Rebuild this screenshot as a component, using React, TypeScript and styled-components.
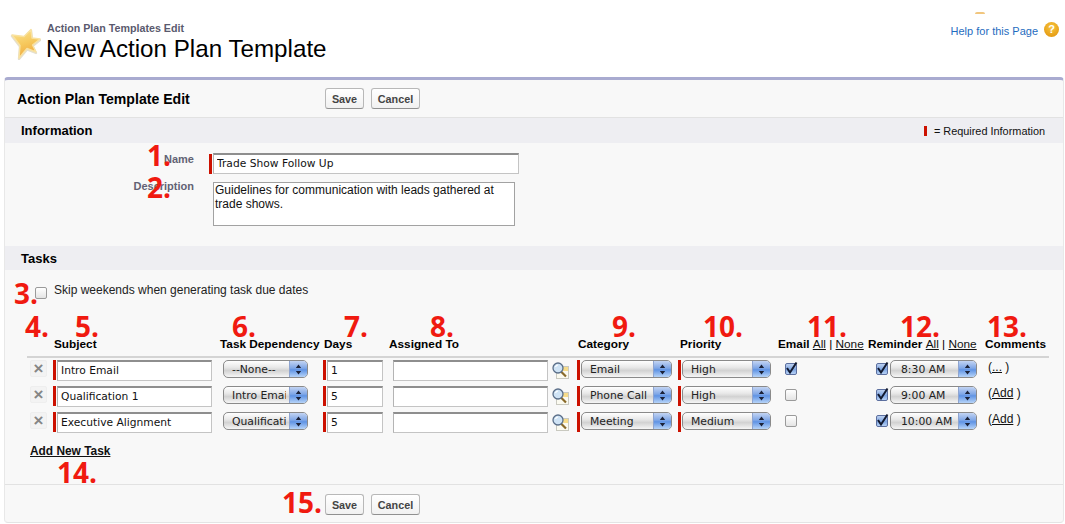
import React from 'react';
import styled, { createGlobalStyle } from 'styled-components';

const GlobalStyle = createGlobalStyle`
  html, body {
    margin: 0;
    background: #fff;
    font-family: "Liberation Sans", Arial, sans-serif;
    color: #000;
  }
`;

const Page = styled.div`
  position: relative;
  width: 1065px;
  height: 524px;
  overflow: hidden;
`;

const PageHead = styled.header`
  display: flex;
  height: 77px;
  box-sizing: border-box;
  padding: 28px 6px 0 9px;
`;

const Titles = styled.div`
  margin: -6px 0 0 5px;
`;

const Crumb = styled.div`
  margin-left: 1px;
  font-size: 10.7px;
  font-weight: bold;
  line-height: 13px;
  color: #5a5a6e;
`;

const PageTitle = styled.h1`
  margin: 0;
  font-size: 24.2px;
  font-weight: normal;
  line-height: 28px;
`;

const Help = styled.div`
  margin: -6px 0 0 auto;
  display: flex;
  align-items: flex-start;
  gap: 6px;
  color: #1f6cc0;
  font-size: 11px;
  line-height: 15px;
`;

const HelpText = styled.span`
  margin-top: 2px;
`;

const HelpDot = styled.span`
  display: flex;
  align-items: center;
  justify-content: center;
  width: 15px;
  height: 15px;
  border-radius: 50%;
  background: radial-gradient(circle at 50% 35%, #f7c640, #e08f06);
  color: #fff;
  font-size: 11px;
  font-weight: bold;
`;

const StrayArc = styled.span`
  position: absolute;
  left: 975px;
  top: 12px;
  width: 10px;
  height: 2px;
  border-radius: 5px 5px 0 0;
  background: #f1c67e;
`;

const Panel = styled.main`
  margin-left: 4px;
  width: 1060px;
  height: 446px;
  box-sizing: border-box;
  background: #f8f8f8;
  border-top: 3px solid #a9abd0;
  border-left: 1px solid #e8e8e8;
  border-right: 1px solid #e8e8e8;
  border-bottom: 1px solid #e4e4e4;
  border-radius: 4px;
`;

const TopRow = styled.div`
  display: grid;
  grid-template-columns: 320px auto;
  justify-content: start;
  align-items: center;
  height: 37px;
  border-bottom: 1px solid #e2e2e2;
`;

const TopTitle = styled.h2`
  margin: 0 0 0 12px;
  font-size: 14.1px;
  font-weight: bold;
  white-space: nowrap;
`;

const Buttons = styled.div`
  display: flex;
  gap: 7px;
`;

const Button = styled.button<{ $wide?: boolean }>`
  width: ${(p) => (p.$wide ? '49px' : '39px')};
  height: 21px;
  padding: 0;
  border: 1px solid #b8b8b8;
  border-bottom-color: #909090;
  border-radius: 3px;
  background: linear-gradient(#fff, #f1f1f1);
  color: #444;
  font-family: inherit;
  font-size: 10.8px;
  font-weight: bold;
`;

const SectionBar = styled.div`
  display: flex;
  align-items: center;
  justify-content: space-between;
  box-sizing: border-box;
  padding: 0 18px 0 16px;
  background: #eeeef2;
`;

const InfoBar = styled(SectionBar)`
  height: 25px;
`;

const TasksBar = styled(SectionBar)`
  height: 24px;
`;

const SectionTitle = styled.h3`
  margin: 0;
  font-size: 13px;
  font-weight: bold;
`;

const Legend = styled.div`
  display: flex;
  align-items: center;
  gap: 7px;
  font-size: 10.9px;
  color: #111;
`;

const RedBar = styled.span`
  flex: none;
  width: 3px;
  height: 20px;
  background: #cc1100;
`;

const LegendBar = styled(RedBar)`
  height: 10px;
`;

const InfoBody = styled.div`
  display: grid;
  grid-template-columns: 189px auto;
  column-gap: 19px;
  row-gap: 8px;
  align-content: start;
  height: 103px;
  box-sizing: border-box;
  padding-top: 10px;
`;

const FieldLabel = styled.label`
  justify-self: end;
  font-size: 11px;
  font-weight: bold;
  color: #626274;
  line-height: 13px;
`;

const DescriptionLabel = styled(FieldLabel)`
  margin-top: -2px;
`;

const Required = styled.div`
  display: flex;
  align-items: center;
  gap: 1px;
  margin-left: -4px;
`;

const Plain = styled.div``;

const TextField = styled.input<{ $w: number }>`
  width: ${(p) => p.$w}px;
  height: 21px;
  box-sizing: border-box;
  padding: 0 3px 2px;
  border: 1px solid #c4c4c4;
  border-top: 2px solid #8e8e8e;
  border-left-color: #b4b4b4;
  background: #fff;
  color: #111;
  font-family: "DejaVu Sans", sans-serif;
  font-size: 10.7px;
  outline: none;
`;

const Description = styled.textarea`
  display: block;
  width: 302px;
  height: 44px;
  box-sizing: border-box;
  padding: 0 1px;
  border: 1px solid #a2a2a2;
  background: #fff;
  color: #111;
  font-family: "Liberation Sans", Arial, sans-serif;
  font-size: 12px;
  line-height: 14px;
  resize: none;
  outline: none;
`;

const TasksBody = styled.div`
  height: 214px;
  box-sizing: border-box;
  padding-top: 13px;
`;

const SkipRow = styled.div`
  display: flex;
  align-items: flex-start;
  gap: 7px;
  margin-left: 30px;
  font-size: 12px;
  line-height: 14px;
  color: #222;
`;

const SkipBox = styled.span`
  margin-top: 4px;
`;

const TaskTable = styled.div`
  margin: 38px 0 0 22px;
  width: 1022px;
`;

const HeadRow = styled.div`
  display: grid;
  grid-template-columns: 27px 166px 104px 65px 189px 102px 98px 90px 117px 64px;
  padding-bottom: 5px;
  border-bottom: 2px solid #d4d4d4;
  margin-bottom: 2px;
  font-size: 11.8px;
  font-weight: bold;
  line-height: 14px;
  white-space: nowrap;
`;

const HeadLinks = styled.span`
  font-weight: normal;
  a {
    color: #111;
    text-decoration: underline;
  }
`;

const TaskRow = styled.div`
  display: grid;
  grid-template-columns: 26px 170px 100px 70px 184px 101px 107px 91px 112px 61px;
  height: 26px;
  align-items: start;
`;

const Cell = styled.div`
  display: flex;
  align-items: flex-start;
  gap: 1px;
`;

const LookupCell = styled(Cell)`
  gap: 4px;
`;

const DeleteBtn = styled.span`
  display: flex;
  align-items: center;
  justify-content: center;
  margin-left: 3px;
  width: 17px;
  height: 17px;
  box-sizing: border-box;
  border: 1px solid #eee;
  border-radius: 2px;
  background: #f3f3f3;
  color: #858585;
  font-size: 17px;
  font-weight: bold;
  line-height: 1;
`;

const Select = styled.div<{ $w: number; $pad?: number }>`
  position: relative;
  width: ${(p) => p.$w}px;
  height: 18px;
  box-sizing: border-box;
  padding: 1px 21px 0 ${(p) => p.$pad ?? 8}px;
  border: 1px solid #8a8a8a;
  border-radius: 5px;
  background: linear-gradient(#fff 0%, #e8e8e8 40%, #d2d2d2 60%, #f6f6f6 100%);
  font-family: "DejaVu Sans", sans-serif;
  font-size: 10.8px;
  line-height: 15px;
  color: #222;
  white-space: nowrap;
  overflow: hidden;
`;

const SelectText = styled.span`
  display: block;
  overflow: hidden;
`;

const SelectArrows = styled.span`
  position: absolute;
  right: 0;
  top: 0;
  bottom: 0;
  width: 17px;
  display: flex;
  align-items: center;
  justify-content: center;
  border-left: 1px solid #8ea4d0;
  background: linear-gradient(#c3d4f3 0%, #7ea6e6 45%, #5f93e4 55%, #b7d4f8 100%);
`;

const CheckBox = styled.span<{ $on?: boolean }>`
  display: flex;
  align-items: center;
  justify-content: center;
  width: 12px;
  height: 12px;
  box-sizing: border-box;
  border: 1px solid ${(p) => (p.$on ? '#5c6f9f' : '#9a9a9a')};
  border-radius: 2px;
  background: ${(p) =>
    p.$on
      ? 'linear-gradient(#bcd0f0, #7fa6e2 55%, #b7d2f6)'
      : 'linear-gradient(#fff, #e4e4e4)'};
`;

const EmailCheck = styled.div`
  padding-top: 3px;
`;

const ReminderCell = styled(Cell)`
  gap: 2px;
`;

const ReminderCheck = styled.div`
  padding-top: 3px;
`;

const Comment = styled.div`
  font-size: 12px;
  line-height: 14px;
  color: #111;
  a {
    color: #111;
    text-decoration: underline;
  }
`;

const AddTask = styled.a`
  display: inline-block;
  margin: 7px 0 0 3px;
  font-size: 11.9px;
  font-weight: bold;
  line-height: 13px;
  color: #111;
  text-decoration: underline;
`;

const Footer = styled.div`
  height: 38px;
  box-sizing: border-box;
  padding: 9px 0 0 320px;
  border-top: 1px solid #e2e2e2;
`;

const Mark = styled.span<{ $x: number; $y: number }>`
  position: absolute;
  left: ${(p) => p.$x}px;
  top: ${(p) => p.$y}px;
  color: #f01a10;
  font-family: "Open Sans", sans-serif;
  font-size: 28px;
  font-weight: 700;
  line-height: 1;
`;

const starPath =
  'M22 1.5 L23 10 L31 11 L23.5 17 L27 24 L18 20.5 L10 30 L11 17.5 L3 7 L15 8.5 Z';

const Star = () => (
  <svg width="32" height="32" viewBox="0 0 32 32" style={{ flex: 'none' }}>
    <defs>
      <linearGradient id="starFill" x1="0.3" y1="0" x2="0.6" y2="1">
        <stop offset="0" stopColor="#fae08a" />
        <stop offset="0.5" stopColor="#f6c85c" />
        <stop offset="1" stopColor="#efa53c" />
      </linearGradient>
    </defs>
    <path
      d={starPath}
      fill="#e4dfcf"
      stroke="#e4dfcf"
      strokeWidth="2.4"
      strokeLinejoin="round"
      transform="translate(0 1)"
    />
    <path
      d={starPath}
      fill="url(#starFill)"
      stroke="#f9e2a0"
      strokeWidth="1.4"
      strokeLinejoin="round"
    />
  </svg>
);

const Arrows = () => (
  <svg width="7" height="11" viewBox="0 0 7 11">
    <path d="M3.5 0.5 L6.2 4 H0.8 Z M3.5 10.5 L0.8 7 H6.2 Z" fill="#1b2238" />
  </svg>
);

const Tick = () => (
  <svg width="12" height="12" viewBox="0 0 12 12" style={{ overflow: 'visible' }}>
    <path d="M2 5 L5 9.5 L11.5 -0.5" fill="none" stroke="#121a30" strokeWidth="2" />
  </svg>
);

const Lookup = () => (
  <svg width="17" height="17" viewBox="0 0 17 17" style={{ flex: 'none', marginTop: 2 }}>
    <rect x="4.5" y="4.5" width="12" height="12" fill="#fbfaf0" stroke="#c9c9c0" />
    <rect x="11" y="5" width="5" height="4" fill="#f7dc8a" />
    <path d="M9 9.5 L14 14.5" stroke="#8a6a2a" strokeWidth="2.2" />
    <circle cx="6" cy="6" r="5" fill="#cfe3f5" stroke="#5a6e88" strokeWidth="1.3" />
    <path d="M3.5 5 A3 3 0 0 1 6 3" fill="none" stroke="#fff" strokeWidth="1.2" />
  </svg>
);

const Field = ({ w, value, required }: { w: number; value?: string; required?: boolean }) => {
  const input = <TextField $w={w} defaultValue={value ?? ''} readOnly />;
  if (!required) return input;
  return (
    <>
      <RedBar />
      {input}
    </>
  );
};

const Dropdown = ({ w, value, pad }: { w: number; value: string; pad?: number }) => (
  <Select $w={w} $pad={pad}>
    <SelectText>{value}</SelectText>
    <SelectArrows>
      <Arrows />
    </SelectArrows>
  </Select>
);

const tasks = [
  { subject: 'Intro Email', dep: '--None--', days: '1', cat: 'Email', pri: 'High', email: true, time: '8:30 AM', comment: '...' },
  { subject: 'Qualification 1', dep: 'Intro Email', days: '5', cat: 'Phone Call', pri: 'High', email: false, time: '9:00 AM', comment: 'Add' },
  { subject: 'Executive Alignment', dep: 'Qualification 1', days: '5', cat: 'Meeting', pri: 'Medium', email: false, time: '10:00 AM', comment: 'Add' },
];

const marks: [string, number, number][] = [
  ['1.', 147, 141],
  ['2.', 147, 173],
  ['3.', 14, 279],
  ['4.', 25, 312],
  ['5.', 75, 312],
  ['6.', 232, 312],
  ['7.', 344, 312],
  ['8.', 430, 312],
  ['9.', 612, 312],
  ['10.', 703, 312],
  ['11.', 807, 312],
  ['12.', 900, 312],
  ['13.', 987, 312],
  ['14.', 57, 458],
  ['15.', 282, 488],
];

const SaveCancel = () => (
  <Buttons>
    <Button>Save</Button>
    <Button $wide>Cancel</Button>
  </Buttons>
);

export default function App() {
  return (
    <Page>
      <GlobalStyle />
      <PageHead>
        <Star />
        <Titles>
          <Crumb>Action Plan Templates Edit</Crumb>
          <PageTitle>New Action Plan Template</PageTitle>
        </Titles>
        <Help>
          <HelpText>Help for this Page</HelpText>
          <HelpDot>?</HelpDot>
        </Help>
        <StrayArc />
      </PageHead>

      <Panel>
        <TopRow>
          <TopTitle>Action Plan Template Edit</TopTitle>
          <SaveCancel />
        </TopRow>

        <InfoBar>
          <SectionTitle>Information</SectionTitle>
          <Legend>
            <LegendBar />
            = Required Information
          </Legend>
        </InfoBar>
        <InfoBody>
          <FieldLabel>Name</FieldLabel>
          <Required>
            <Field w={306} value="Trade Show Follow Up" required />
          </Required>
          <DescriptionLabel>Description</DescriptionLabel>
          <Plain>
            <Description
              readOnly
              defaultValue="Guidelines for communication with leads gathered at trade shows."
            />
          </Plain>
        </InfoBody>

        <TasksBar>
          <SectionTitle>Tasks</SectionTitle>
        </TasksBar>
        <TasksBody>
          <SkipRow>
            <SkipBox>
              <CheckBox />
            </SkipBox>
            Skip weekends when generating task due dates
          </SkipRow>
          <TaskTable>
            <HeadRow>
              <span />
              <span>Subject</span>
              <span>Task Dependency</span>
              <span>Days</span>
              <span>Assigned To</span>
              <span>Category</span>
              <span>Priority</span>
              <span>
                Email{' '}
                <HeadLinks>
                  <a>All</a> | <a>None</a>
                </HeadLinks>
              </span>
              <span>
                Reminder{' '}
                <HeadLinks>
                  <a>All</a> | <a>None</a>
                </HeadLinks>
              </span>
              <span>Comments</span>
            </HeadRow>
            {tasks.map((t) => (
              <TaskRow key={t.subject}>
                <DeleteBtn>×</DeleteBtn>
                <Cell>
                  <Field w={155} value={t.subject} required />
                </Cell>
                <Dropdown w={85} value={t.dep} />
                <Cell>
                  <Field w={56} value={t.days} required />
                </Cell>
                <LookupCell>
                  <Field w={155} />
                  <Lookup />
                </LookupCell>
                <Cell>
                  <RedBar />
                  <Dropdown w={91} value={t.cat} />
                </Cell>
                <Cell>
                  <RedBar />
                  <Dropdown w={89} value={t.pri} />
                </Cell>
                <EmailCheck>
                  <CheckBox $on={t.email}>{t.email && <Tick />}</CheckBox>
                </EmailCheck>
                <ReminderCell>
                  <ReminderCheck>
                    <CheckBox $on>
                      <Tick />
                    </CheckBox>
                  </ReminderCheck>
                  <Dropdown w={87} value={t.time} pad={10} />
                </ReminderCell>
                <Comment>
                  (<a>{t.comment}</a> )
                </Comment>
              </TaskRow>
            ))}
            <AddTask>Add New Task</AddTask>
          </TaskTable>
        </TasksBody>

        <Footer>
          <SaveCancel />
        </Footer>
      </Panel>

      {marks.map(([label, x, y]) => (
        <Mark key={label} $x={x} $y={y}>
          {label}
        </Mark>
      ))}
    </Page>
  );
}
